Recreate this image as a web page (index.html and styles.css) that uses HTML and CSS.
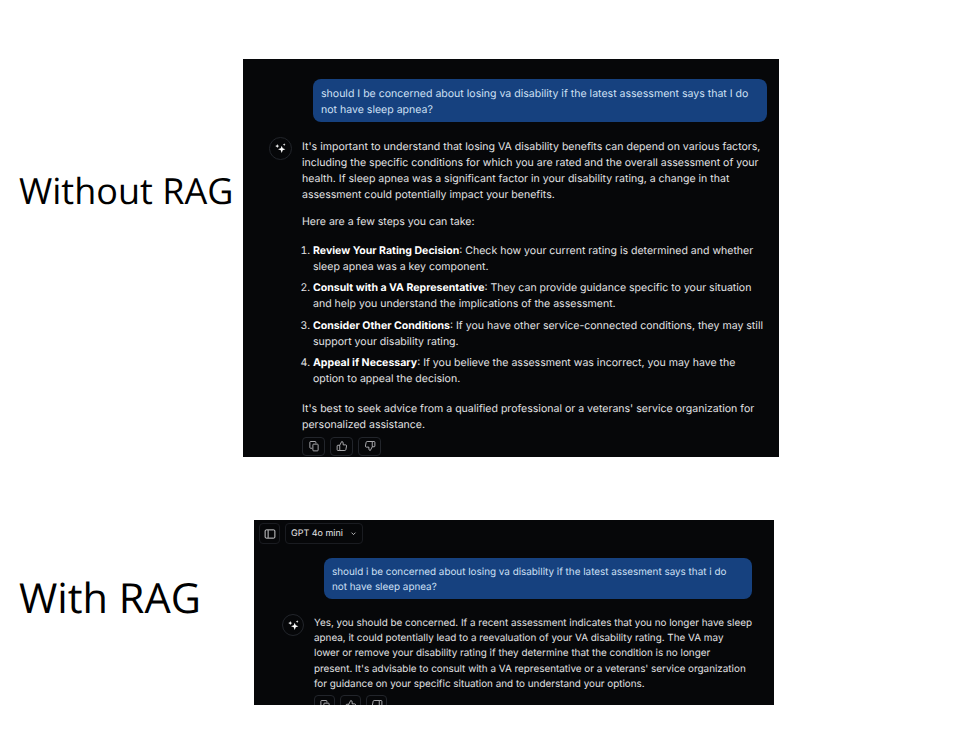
FILE: index.html
```html
<!DOCTYPE html>
<html lang="en">
<head>
  <meta charset="UTF-8">
  <title>Without RAG / With RAG</title>
  <link rel="stylesheet" href="styles.css">
</head>
<body>
  <svg class="defs" width="0" height="0">
    <symbol id="i-spark" viewBox="0 0 16 16">
      <path fill="currentColor" d="M9.500 4.500l1.200 3.300 3.300 1.200-3.300 1.200-1.200 3.300-1.200-3.300L5 9l3.300-1.200zM4 2.500l.7 1.800 1.800.7-1.800.7L4 7.500l-.7-1.800L1.500 5l1.800-.7zM12.500 1.500l.5 1.200 1.200.5-1.200.5-.5 1.200-.5-1.200-1.200-.5 1.200-.5z"/>
    </symbol>
    <symbol id="i-copy" viewBox="0 0 16 16">
      <path fill="none" stroke="currentColor" stroke-width="1.100" d="M10.500 4.500V3a1 1 0 0 0-1-1H3.500a1 1 0 0 0-1 1v7a1 1 0 0 0 1 1h2"/>
      <rect x="6.500" y="5.500" width="7" height="9" rx="1" fill="none" stroke="currentColor" stroke-width="1.100"/>
    </symbol>
    <symbol id="i-up" viewBox="0 0 16 16">
      <path fill="none" stroke="currentColor" stroke-width="1.100" stroke-linejoin="round" d="M5 7l2.600-5c1.200 0 1.900.8 1.900 1.900V6.500h3.400c.8 0 1.400.7 1.200 1.500l-1 5c-.1.600-.7 1-1.300 1H5zM5 7H2.500a1 1 0 0 0-1 1v5a1 1 0 0 0 1 1H5"/>
    </symbol>
    <symbol id="i-down" viewBox="0 0 16 16">
      <path fill="none" stroke="currentColor" stroke-width="1.100" stroke-linejoin="round" d="M11 9l-2.600 5c-1.200 0-1.900-.8-1.900-1.900V9.500H3.100c-.8 0-1.400-.7-1.200-1.500l1-5c.1-.6.700-1 1.300-1H11zM11 9h2.500a1 1 0 0 0 1-1V3a1 1 0 0 0-1-1H11"/>
    </symbol>
    <symbol id="i-side" viewBox="0 0 16 16">
      <rect x="1.500" y="2.500" width="13" height="11" rx="1.500" fill="none" stroke="currentColor" stroke-width="1.200"/>
      <path fill="none" stroke="currentColor" stroke-width="1.200" d="M5.500 3v10"/>
    </symbol>
    <symbol id="i-chev" viewBox="0 0 16 16">
      <path fill="none" stroke="currentColor" stroke-width="1.800" d="M3.500 6l4.500 4.500L12.500 6"/>
    </symbol>
  </svg>

  <section class="row row-without">
    <h2 class="label">Without RAG</h2>
    <div class="panel panel-without">
      <div class="bubble">should I be concerned about losing va disability if the latest assessment says that I do not have sleep apnea?</div>
      <div class="answer">
        <span class="avatar"><svg class="spark"><use href="#i-spark"/></svg></span>
        <div class="answer-body">
          <p>It's important to understand that losing VA disability benefits can depend on various factors, including the specific conditions for which you are rated and the overall assessment of your health. If sleep apnea was a significant factor in your disability rating, a change in that assessment could potentially impact your benefits.</p>
          <p>Here are a few steps you can take:</p>
          <ol class="steps">
            <li><b>Review Your Rating Decision</b>: Check how your current rating is determined and whether sleep apnea was a key component.</li>
            <li><b>Consult with a VA Representative</b>: They can provide guidance specific to your situation and help you understand the implications of the assessment.</li>
            <li><b>Consider Other Conditions</b>: If you have other service-connected conditions, they may still support your disability rating.</li>
            <li><b>Appeal if Necessary</b>: If you believe the assessment was incorrect, you may have the option to appeal the decision.</li>
          </ol>
          <p>It's best to seek advice from a qualified professional or a veterans' service organization for personalized assistance.</p>
          <div class="actions">
            <span class="action"><svg class="icon"><use href="#i-copy"/></svg></span>
            <span class="action"><svg class="icon"><use href="#i-up"/></svg></span>
            <span class="action"><svg class="icon"><use href="#i-down"/></svg></span>
          </div>
        </div>
      </div>
    </div>
  </section>

  <section class="row row-with">
    <h2 class="label">With RAG</h2>
    <div class="panel panel-with">
      <div class="topbar">
        <span class="tool"><svg class="icon"><use href="#i-side"/></svg></span>
        <span class="tool tool-model">GPT 4o mini <svg class="chev"><use href="#i-chev"/></svg></span>
      </div>
      <div class="bubble">should i be concerned about losing va disability if the latest assesment says that i do not have sleep apnea?</div>
      <div class="answer">
        <span class="avatar"><svg class="spark"><use href="#i-spark"/></svg></span>
        <div class="answer-body">
          <p>Yes, you should be concerned. If a recent assessment indicates that you no longer have sleep<br>
          apnea, it could potentially lead to a reevaluation of your VA disability rating. The VA may<br>
          lower or remove your disability rating if they determine that the condition is no longer<br>
          present. It's advisable to consult with a VA representative or a veterans' service organization<br>
          for guidance on your specific situation and to understand your options.</p>
          <div class="actions">
            <span class="action"><svg class="icon"><use href="#i-copy"/></svg></span>
            <span class="action"><svg class="icon"><use href="#i-up"/></svg></span>
            <span class="action"><svg class="icon"><use href="#i-down"/></svg></span>
          </div>
        </div>
      </div>
    </div>
  </section>
</body>
</html>
```

FILE: styles.css
```css
body {
  margin: 0;
  width: 960px;
  height: 752px;
  overflow: hidden;
  background: #fff;
  font-family: Inter, "Liberation Sans", sans-serif;
  text-rendering: geometricPrecision;
}
.defs {
  display: block;
}
.row {
  display: flex;
  align-items: flex-start;
  padding-left: 19px;
}
.row-without {
  padding-top: 59px;
}
.row-with {
  padding-top: 63px;
}
.label {
  margin: 0;
  font-family: "Open Sans", sans-serif;
  font-weight: 400;
  line-height: 46px;
  color: #000;
}
.row-without .label {
  width: 224px;
  margin-top: 109px;
  font-size: 36px;
}
.row-with .label {
  width: 235px;
  margin-top: 55px;
  font-size: 41.5px;
}
.panel {
  background: #060709;
  color: #e3e3e5;
  overflow: hidden;
  box-sizing: border-box;
}
.panel-without {
  width: 536px;
  height: 398px;
  padding: 20px 12px 0 26px;
  font-size: 10.55px;
  line-height: 16px;
}
.panel-with {
  width: 520px;
  height: 185px;
  padding: 3px 22px 0 28px;
  font-size: 9.9px;
  line-height: 15.2px;
}
.bubble {
  background: #16417f;
  color: #cfe0f5;
  border-radius: 8px;
  padding: 7px 8px 4px;
  margin-left: 44px;
}
.panel-with .bubble {
  margin-left: 42px;
  padding: 7px 8px 3.6px;
}
.answer {
  display: flex;
  gap: 10px;
  margin-top: 15px;
}
.panel-with .answer {
  gap: 9px;
}
.answer-body {
  padding-top: 2px;
}
.avatar {
  flex: none;
  width: 23px;
  height: 23px;
  display: flex;
  align-items: center;
  justify-content: center;
  border: 1px solid #22252b;
  border-radius: 50%;
  box-sizing: border-box;
  color: #fff;
}
.panel-with .avatar {
  width: 22px;
  height: 22px;
  margin-right: 1px;
}
.spark {
  width: 13px;
  height: 13px;
}
.answer-body p {
  margin: 0 0 10.5px;
}
.panel-with .answer-body p {
  margin-bottom: 9px;
}
.panel-with .answer-body {
  white-space: nowrap;
}
.steps {
  margin: 13px 0 14px;
  padding-left: 11px;
}
.steps li {
  margin-bottom: 5.5px;
}
.steps b {
  font-weight: 700;
  color: #fff;
}
.answer-body .actions {
  display: flex;
  gap: 5px;
  margin-top: -7px;
}
.panel-with .answer-body .actions {
  margin-top: -6px;
}
.action {
  width: 23px;
  height: 19px;
  display: flex;
  align-items: center;
  justify-content: center;
  border: 1px solid #22252b;
  border-radius: 4px;
  box-sizing: border-box;
  color: #c9cacd;
}
.panel-with .action {
  width: 21px;
}
.icon {
  width: 12px;
  height: 12px;
}
.topbar {
  display: flex;
  gap: 5px;
  margin: 0 0 14px -23px;
}
.tool {
  height: 21px;
  min-width: 21px;
  display: flex;
  align-items: center;
  justify-content: center;
  gap: 7px;
  border: 1px solid #1a1c21;
  border-radius: 4px;
  box-sizing: border-box;
  color: #e3e3e5;
}
.tool-model {
  width: 78px;
  font-size: 9px;
}
.chev {
  width: 7px;
  height: 7px;
}
```
